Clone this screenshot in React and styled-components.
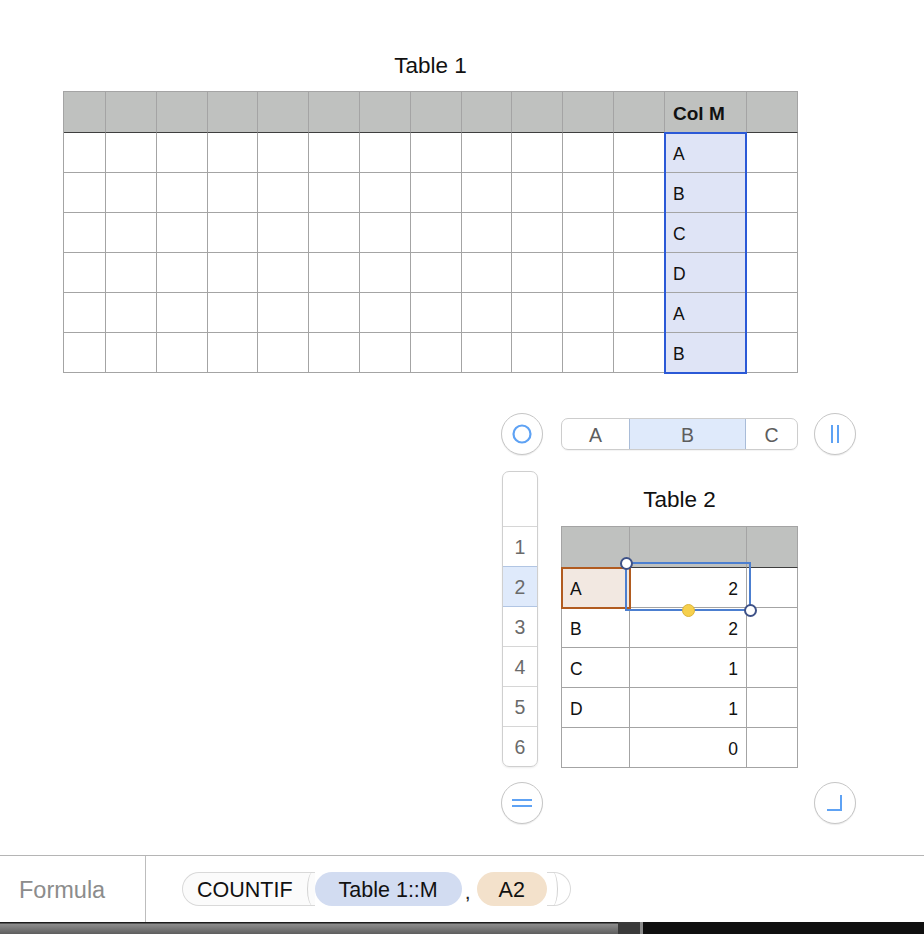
import React from "react";
import styled, { createGlobalStyle, css } from "styled-components";

const GlobalStyle = createGlobalStyle`
  html, body {
    margin: 0;
    padding: 0;
    background: #fff;
  }
  body {
    font-family: "Liberation Sans", Arial, sans-serif;
    color: #111;
    overflow: hidden;
  }
`;

const Page = styled.div`
  width: 924px;
  height: 934px;
  display: flex;
  flex-direction: column;
`;

const Canvas = styled.div`
  height: 855px;
  padding-top: 55px;
  box-sizing: border-box;
`;

const TableTitle = styled.div`
  font-size: 22.5px;
  line-height: 22px;
  height: 36px;
  text-align: center;
`;

const Table1Block = styled.div`
  width: 735px;
  margin-left: 63px;
`;

const GridWrap = styled.div`
  position: relative;
`;

const Grid = styled.div`
  display: grid;
  grid-template-columns: ${(p) => p.cols};
  border-left: 1px solid #a4a4a4;
  border-top: 1px solid #a4a4a4;
`;

const Cell = styled.div`
  box-sizing: border-box;
  height: 40px;
  border-right: 1px solid #a4a4a4;
  border-bottom: 1px solid #a4a4a4;
  display: flex;
  align-items: center;
  font-size: 17.5px;
  padding: 4px 8px 0 8px;
  justify-content: ${(p) => (p.right ? "flex-end" : "flex-start")};
  background: ${(p) => p.bg || "#fff"};
  ${(p) =>
    p.head &&
    css`
      height: 41px;
      background: #bfc1bf;
      border-bottom-color: #3e3e3e;
      font-weight: bold;
      font-size: 19px;
      padding-left: 8px;
    `}
  ${(p) =>
    p.picked &&
    css`
      position: relative;
      z-index: 1;
      background: #f2e8e1;
      outline: 2px solid #b15b1f;
      outline-offset: -1px;
    `}
`;

const ColumnFrame = styled.div`
  position: absolute;
  left: 601px;
  top: 41px;
  width: 83px;
  height: 242px;
  box-sizing: border-box;
  border: 2px solid #2b59d6;
  pointer-events: none;
`;

const Lower = styled.div`
  margin-top: 40px;
  margin-left: 501px;
  display: grid;
  grid-template-columns: 42px 18px 237px 16px 42px;
  grid-template-rows: 42px 295px 42px;
  row-gap: 16px;
`;

const RoundButton = styled.button`
  width: 42px;
  height: 42px;
  border-radius: 50%;
  border: 1.5px solid #c6c6c6;
  background: #fff;
  box-shadow: 0 1px 1px rgba(0, 0, 0, 0.08);
  padding: 0;
  display: flex;
  align-items: center;
  justify-content: center;
  grid-column: ${(p) => p.col};
`;

const Segmented = styled.div`
  grid-column: 3;
  align-self: center;
  height: 32px;
  box-sizing: border-box;
  border: 1px solid #cdcdcd;
  border-radius: 7px;
  display: grid;
  grid-template-columns: 67px 117px 1fr;
  overflow: hidden;
  box-shadow: 0 1px 1px rgba(0, 0, 0, 0.05);
`;

const Segment = styled.div`
  display: flex;
  align-items: center;
  justify-content: center;
  padding-top: 2px;
  font-size: 19.5px;
  color: #5d5d5d;
  ${(p) =>
    p.active &&
    css`
      background: #dfeafb;
      border-left: 1px solid #a9bcd8;
      border-right: 1px solid #a9bcd8;
    `}
`;

const Rail = styled.div`
  grid-column: 1;
  margin-left: 1px;
  width: 36px;
  height: 296px;
  box-sizing: border-box;
  border: 1px solid #cfcfcf;
  border-radius: 7px;
  overflow: hidden;
  box-shadow: 0 1px 2px rgba(0, 0, 0, 0.08);
`;

const RailTop = styled.div`
  height: 54px;
`;

const RailCell = styled.div`
  height: 40px;
  box-sizing: border-box;
  border-top: 1px solid #d6d6d6;
  display: flex;
  align-items: center;
  justify-content: center;
  padding-top: 2px;
  font-size: 19.5px;
  color: #6a6a6a;
  ${(p) =>
    p.active &&
    css`
      background: #dfeafb;
      border-top-color: #b1c5e3;
      & + div {
        border-top-color: #b1c5e3;
      }
    `}
`;

const Table2Block = styled.div`
  grid-column: 3;
`;

const Table2Title = styled(TableTitle)`
  height: 55px;
  line-height: 57px;
`;

const SelectionBox = styled.div`
  position: absolute;
  left: 64px;
  top: 36px;
  width: 126px;
  height: 49px;
  box-sizing: border-box;
  border: 2px solid #4c7fd0;
  z-index: 2;
  pointer-events: none;
`;

const Handle = styled.div`
  position: absolute;
  width: 13px;
  height: 13px;
  box-sizing: border-box;
  border-radius: 50%;
  z-index: 3;
  left: ${(p) => p.x - 6.5}px;
  top: ${(p) => p.y - 6.5}px;
  background: ${(p) => (p.yellow ? "#f6d04d" : "#fff")};
  border: ${(p) => (p.yellow ? "1px solid #dcb53a" : "2px solid #3e5288")};
`;

const FormulaBar = styled.div`
  height: 67px;
  box-sizing: border-box;
  border-top: 1px solid #b5b5b5;
  display: flex;
`;

const FormulaLabel = styled.div`
  width: 146px;
  box-sizing: border-box;
  border-right: 1px solid #bdbdbd;
  padding-left: 19px;
  padding-top: 2px;
  display: flex;
  align-items: center;
  font-size: 23.5px;
  color: #8c8c8c;
`;

const Tokens = styled.div`
  padding-left: 36px;
  display: flex;
  align-items: center;
`;

const FuncHead = styled.span`
  height: 34px;
  box-sizing: border-box;
  display: flex;
  align-items: center;
  padding: 2px 12px 0 14px;
  border: 1px solid #d9d9d9;
  border-right: none;
  border-radius: 17px 0 0 17px;
  background: #fbfbfb;
  font-size: 21.5px;
  color: #111;
`;

const OpenParen = styled.span`
  width: 10px;
  height: 34px;
  box-sizing: border-box;
  border: 1px solid #d9d9d9;
  border-left: none;
  border-right: none;
  background: #fbfbfb;
  position: relative;
  &::after {
    content: "";
    position: absolute;
    left: 2px;
    top: -1px;
    width: 12px;
    height: 34px;
    box-sizing: border-box;
    border-left: 1.5px solid #d2d2d2;
    border-radius: 50% 0 0 50%;
  }
`;

const RefPill = styled.span`
  height: 34px;
  box-sizing: border-box;
  display: flex;
  align-items: center;
  padding: 2px ${(p) => p.pad}px 0;
  border-radius: 17px;
  font-size: 21.5px;
  color: #111;
  background: ${(p) => (p.tone === "blue" ? "#d2dcf1" : "#f3e1cb")};
`;

const Comma = styled.span`
  font-size: 21px;
  padding: 6px 6px 0 3px;
  color: #222;
`;

const CloseParen = styled.span`
  width: 24px;
  height: 34px;
  box-sizing: border-box;
  border: 1px solid #d9d9d9;
  border-left: none;
  border-radius: 0 17px 17px 0;
  position: relative;
  &::before {
    content: "";
    position: absolute;
    left: 0;
    top: -1px;
    width: 11px;
    height: 34px;
    box-sizing: border-box;
    border-right: 1.5px solid #d2d2d2;
    border-radius: 0 50% 50% 0;
  }
`;

const BottomStrip = styled.div`
  height: 12px;
  display: grid;
  grid-template-columns: 618px 22px 3px 1fr;
`;

const StripPart = styled.div`
  background: ${(p) => p.bg};
`;

const IconRing = () => (
  <svg width="22" height="22" viewBox="0 0 22 22">
    <circle cx="11" cy="11" r="8.5" fill="none" stroke="#5ea2f4" strokeWidth="2.2" />
  </svg>
);

const IconBars = () => (
  <svg width="22" height="22" viewBox="0 0 22 22">
    <path d="M8 2v18M14 2v18" stroke="#5ea2f4" strokeWidth="2" />
  </svg>
);

const IconEquals = () => (
  <svg width="24" height="22" viewBox="0 0 24 22">
    <path d="M2 8h20M2 14h20" stroke="#5ea2f4" strokeWidth="2" />
  </svg>
);

const IconCorner = () => (
  <svg width="22" height="22" viewBox="0 0 22 22">
    <path d="M17 3v15H3" fill="none" stroke="#5ea2f4" strokeWidth="2" />
  </svg>
);

const t1Cols = "42px 51px 51px 50px 51px 51px 51px 51px 50px 51px 51px 51px 82px 51px";
const colM = ["A", "B", "C", "D", "A", "B"];

const t2Rows = [
  ["A", "2"],
  ["B", "2"],
  ["C", "1"],
  ["D", "1"],
  ["", "0"],
];

const Table1 = () => {
  const head = Array.from({ length: 14 }, (_, i) => (
    <Cell head key={`h${i}`}>
      {i === 12 ? "Col M" : ""}
    </Cell>
  ));
  const body = colM.flatMap((v, r) =>
    Array.from({ length: 14 }, (_, c) => (
      <Cell key={`${r}-${c}`} bg={c === 12 ? "#dfe4f6" : undefined}>
        {c === 12 ? v : ""}
      </Cell>
    ))
  );
  return (
    <Table1Block>
      <TableTitle>Table 1</TableTitle>
      <GridWrap>
        <Grid cols={t1Cols}>
          {head}
          {body}
        </Grid>
        <ColumnFrame />
      </GridWrap>
    </Table1Block>
  );
};

const Table2 = () => (
  <Table2Block>
    <Table2Title>Table 2</Table2Title>
    <GridWrap>
      <Grid cols="68px 117px 51px">
        <Cell head />
        <Cell head />
        <Cell head />
        {t2Rows.map(([k, v], i) => (
          <React.Fragment key={i}>
            <Cell picked={i === 0}>{k}</Cell>
            <Cell right>{v}</Cell>
            <Cell />
          </React.Fragment>
        ))}
      </Grid>
      <SelectionBox />
      <Handle x={65} y={37} />
      <Handle x={189} y={84} />
      <Handle yellow x={127} y={84} />
    </GridWrap>
  </Table2Block>
);

export default function App() {
  return (
    <Page>
      <GlobalStyle />
      <Canvas>
        <Table1 />
        <Lower>
          <RoundButton col={1}>
            <IconRing />
          </RoundButton>
          <Segmented>
            <Segment>A</Segment>
            <Segment active>B</Segment>
            <Segment>C</Segment>
          </Segmented>
          <RoundButton col={5}>
            <IconBars />
          </RoundButton>

          <Rail>
            <RailTop />
            {[1, 2, 3, 4, 5, 6].map((n) => (
              <RailCell key={n} active={n === 2}>
                {n}
              </RailCell>
            ))}
          </Rail>
          <Table2 />

          <RoundButton col={1}>
            <IconEquals />
          </RoundButton>
          <RoundButton col={5}>
            <IconCorner />
          </RoundButton>
        </Lower>
      </Canvas>
      <FormulaBar>
        <FormulaLabel>Formula</FormulaLabel>
        <Tokens>
          <FuncHead>COUNTIF</FuncHead>
          <OpenParen />
          <RefPill tone="blue" pad={24}>Table 1::M</RefPill>
          <Comma>,</Comma>
          <RefPill tone="tan" pad={22}>A2</RefPill>
          <CloseParen />
        </Tokens>
      </FormulaBar>
      <BottomStrip>
        <StripPart bg="linear-gradient(to bottom, #1c1c1c 0, #1c1c1c 1px, #8d8d8d 2px, #5e5e5e 100%)" />
        <StripPart bg="#3a3a3a" />
        <StripPart bg="#8a8a8a" />
        <StripPart bg="#0f0f0f" />
      </BottomStrip>
    </Page>
  );
}
